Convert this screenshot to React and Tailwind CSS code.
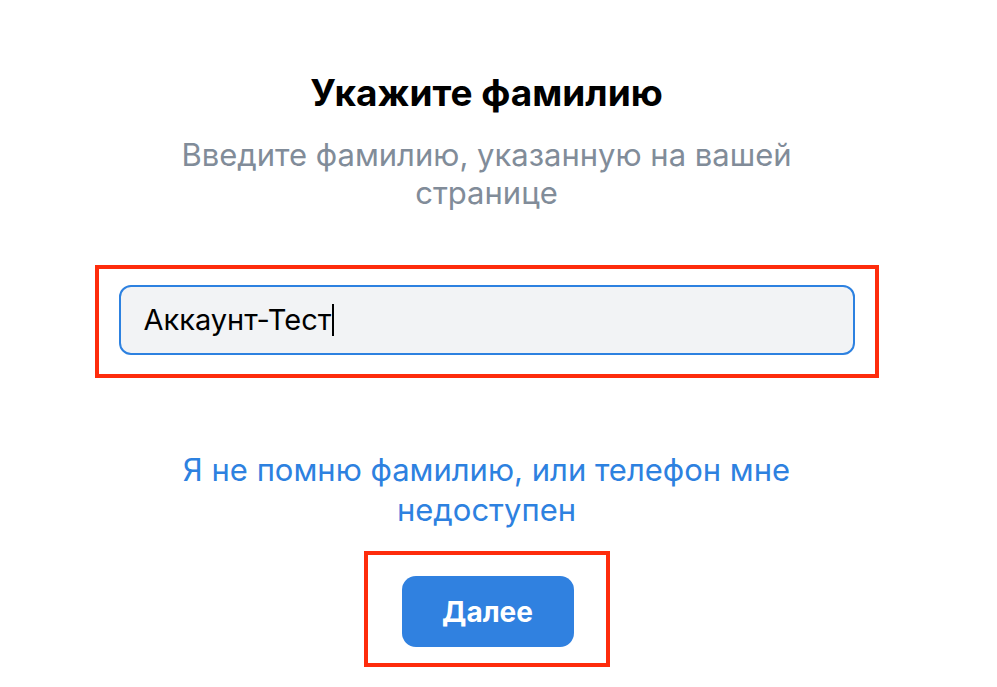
import React from 'react';

const App = () => {
    return (
        <div className="min-h-[687px] bg-white font-['Inter',sans-serif]">
            <div className="w-[973px] flex flex-col items-center pt-[70px]">
                <h1 className="text-[37px] leading-[46px] font-bold text-black">Укажите фамилию</h1>
                <p className="mt-[20px] w-[640px] text-center text-[31px] leading-[38px] text-[#818c99]">
                    Введите фамилию, указанную на вашей странице
                </p>

                <div className="mt-[53px] w-[784px] h-[113px] border-4 border-[#fe2c0c] px-[20px] pt-[16px]">
                    <div className="h-[70px] w-full rounded-[12px] border-2 border-[#2d81e0] bg-[#f2f3f5] pl-[23px] flex items-center">
                        <span className="text-[29px] text-black">Аккаунт-Тест</span>
                        <span className="ml-[1px] w-[2px] h-[32px] bg-black" />
                    </div>
                </div>

                <a href="#" className="mt-[72px] w-[640px] text-center text-[31px] leading-[40px] text-[#2d81e0]">
                    Я не помню фамилию, или телефон мне недоступен
                </a>

                <div className="mt-[21px] w-[246px] h-[116px] border-4 border-[#fe2c0c] pl-[34px] pt-[21px]">
                    <button className="w-[172px] h-[71px] rounded-[14px] bg-[#3081e0] text-white text-[28px] font-bold">
                        Далее
                    </button>
                </div>
            </div>
        </div>
    );
};

export default App;
